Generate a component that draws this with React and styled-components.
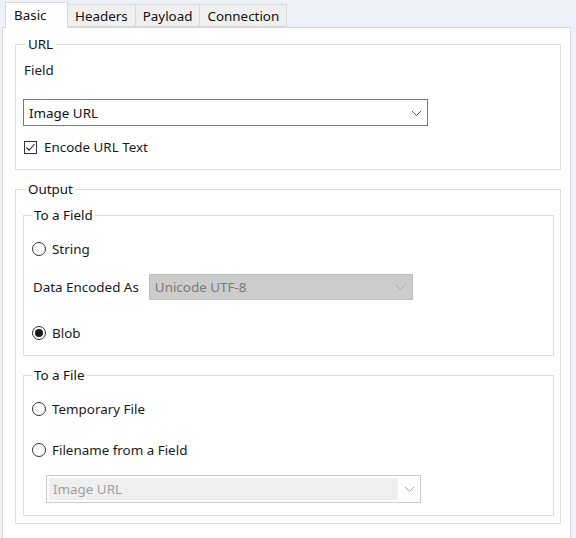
import React, { useState } from 'react'
import styled, { createGlobalStyle } from 'styled-components'

const GlobalStyle = createGlobalStyle`
  html, body {
    margin: 0;
    padding: 0;
    background: #eef1f9;
  }
  body {
    font-family: 'Segoe UI', 'Noto Sans', 'Liberation Sans', sans-serif;
    font-size: 13.4px;
    color: #1a1a1a;
  }
`

const tabs = ['Basic', 'Headers', 'Payload', 'Connection']

const App = () => {
  const [tab, setTab] = useState('Basic')
  const [encode, setEncode] = useState(true)
  const [fieldMode, setFieldMode] = useState('blob')
  const [fileMode, setFileMode] = useState(null)

  return (
    <>
      <GlobalStyle />
      <Window>
        <TabStrip>
          {tabs.map(t => (
            <Tab key={t} active={t === tab} onClick={() => setTab(t)}>{t}</Tab>
          ))}
        </TabStrip>
        <Panel>
          <Group>
            <Legend>URL</Legend>
            <Label top={9}>Field</Label>
            <Combo top={20} width={405} height={27}>
              <ComboText>Image URL</ComboText>
              <Chevron />
            </Combo>
            <CheckRow top={12} onClick={() => setEncode(!encode)}>
              <CheckBox>
                {encode &&
                  <svg width="11" height="11" viewBox="0 0 11 11">
                    <polyline points="1.5,5.5 4.2,8.3 9.5,2" fill="none" stroke="#222" strokeWidth="1.1" />
                  </svg>
                }
              </CheckBox>
              Encode URL Text
            </CheckRow>
            <Spacer h={13} />
          </Group>

          <Group top={11} padRight={6}>
            <Legend>Output</Legend>
            <Spacer h={10} />
            <Group inner>
              <Legend inner>To a Field</Legend>
              <RadioRow top={17} onClick={() => setFieldMode('string')}>
                <Radio checked={fieldMode === 'string'} />
                String
              </RadioRow>
              <FieldRow top={16}>
                <span>Data Encoded As</span>
                <Combo disabled width={264} height={26} shade>
                  <ComboText>Unicode UTF-8</ComboText>
                  <Chevron light />
                </Combo>
              </FieldRow>
              <RadioRow top={24} onClick={() => setFieldMode('blob')}>
                <Radio checked={fieldMode === 'blob'} />
                Blob
              </RadioRow>
              <Spacer h={13} />
            </Group>

            <Group inner top={11}>
              <Legend inner>To a File</Legend>
              <RadioRow top={17} onClick={() => setFileMode('temp')}>
                <Radio checked={fileMode === 'temp'} />
                Temporary File
              </RadioRow>
              <RadioRow top={23} onClick={() => setFileMode('field')}>
                <Radio checked={fileMode === 'field'} />
                Filename from a Field
              </RadioRow>
              <Combo disabled top={16} indent={15} width={375} height={28}>
                <ComboFill>Image URL</ComboFill>
                <Chevron light />
              </Combo>
              <Spacer h={12} />
            </Group>
            <Spacer h={7} />
          </Group>
        </Panel>
      </Window>
    </>
  )
}

export default App

const Chevron = ({ light }) => (
  <ChevronBox>
    <svg width="11" height="7" viewBox="0 0 11 7">
      <polyline points="1,1 5.5,5.5 10,1" fill="none" stroke={light ? '#a8a8a8' : '#5a5a5a'} strokeWidth="1" />
    </svg>
  </ChevronBox>
)

const Window = styled.div `
  padding-left: 2px;
  width: 569px;
  height: 538px;
  display: flex;
  flex-direction: column;
  overflow: hidden;
`

const TabStrip = styled.div `
  display: flex;
  align-items: flex-end;
  height: 27px;
  padding-left: 3px;
  position: relative;
  z-index: 1;
`

const Tab = styled.div `
  box-sizing: border-box;
  height: ${p => p.active ? 26 : 23}px;
  margin-bottom: ${p => p.active ? -1 : 0}px;
  padding: ${p => p.active ? '3px 8px 0' : '2px 7px 0'};
  border: 1px solid #d9d9d9;
  border-bottom: ${p => p.active ? 'none' : '1px solid #d9d9d9'};
  margin-left: -1px;
  background: ${p => p.active ? '#ffffff' : '#f0f0f0'};
  color: #111;
  cursor: default;
  white-space: nowrap;
  &:first-child {
    margin-left: 0;
    width: 63px;
  }
`

const Panel = styled.div `
  flex: 1;
  background: #ffffff;
  border: 1px solid #d9d9d9;
  border-bottom: none;
  padding: 8px 9px 0 12px;
`

const Group = styled.fieldset `
  margin: ${p => p.top || 0}px 0 0;
  padding: 0 ${p => p.padRight || (p.inner ? 0 : 7)}px 0 7px;
  border: 1px solid #dcdcdc;
  display: flex;
  flex-direction: column;
  align-items: flex-start;
  align-self: stretch;
  min-width: 0;
`

const Legend = styled.legend `
  padding: 0 2px;
  margin-left: ${p => p.inner ? 1 : 3}px;
  line-height: 16px;
  color: #111;
`

const Spacer = styled.div `
  height: ${p => p.h}px;
  flex-shrink: 0;
`

const Label = styled.div `
  margin-top: ${p => p.top || 0}px;
  margin-left: 1px;
  line-height: 18px;
`

const Combo = styled.div `
  box-sizing: border-box;
  margin-top: ${p => p.top || 0}px;
  margin-left: ${p => p.indent || 0}px;
  width: ${p => p.width}px;
  height: ${p => p.height}px;
  display: flex;
  align-items: stretch;
  border: 1px solid ${p => p.disabled ? (p.shade ? '#bfbfbf' : '#cccccc') : '#7a7a7a'};
  background: ${p => p.disabled ? (p.shade ? '#cccccc' : '#ffffff') : '#ffffff'};
  color: ${p => p.disabled ? (p.shade ? '#7a7a7a' : '#a0a0a0') : '#111'};
`

const ComboText = styled.div `
  flex: 1;
  display: flex;
  align-items: center;
  padding-left: 5px;
`

const ComboFill = styled.div `
  flex: 1;
  display: flex;
  align-items: center;
  margin: 2px 0 2px 2px;
  padding-left: 4px;
  background: #efefef;
`

const ChevronBox = styled.div `
  width: 22px;
  display: flex;
  align-items: center;
  justify-content: center;
  padding-top: 1px;
`

const CheckRow = styled.label `
  margin-top: ${p => p.top || 0}px;
  display: flex;
  align-items: center;
  gap: 7px;
  line-height: 18px;
  cursor: default;
`

const CheckBox = styled.span `
  box-sizing: border-box;
  width: 13px;
  height: 13px;
  margin-left: 1px;
  border: 1px solid #333;
  background: #fff;
  display: flex;
  align-items: center;
  justify-content: center;
`

const RadioRow = styled.label `
  margin-top: ${p => p.top || 0}px;
  display: flex;
  align-items: center;
  gap: 6px;
  line-height: 18px;
  cursor: default;
`

const Radio = styled.span `
  box-sizing: border-box;
  width: 14px;
  height: 14px;
  margin-left: 1px;
  border-radius: 50%;
  border: 1px solid #333;
  background: #fff;
  display: flex;
  align-items: center;
  justify-content: center;
  &::after {
    content: '';
    display: ${p => p.checked ? 'block' : 'none'};
    width: 8px;
    height: 8px;
    border-radius: 50%;
    background: #1a1a1a;
  }
`

const FieldRow = styled.div `
  margin-top: ${p => p.top || 0}px;
  margin-left: 2px;
  display: flex;
  align-items: center;
  gap: 10px;
`
